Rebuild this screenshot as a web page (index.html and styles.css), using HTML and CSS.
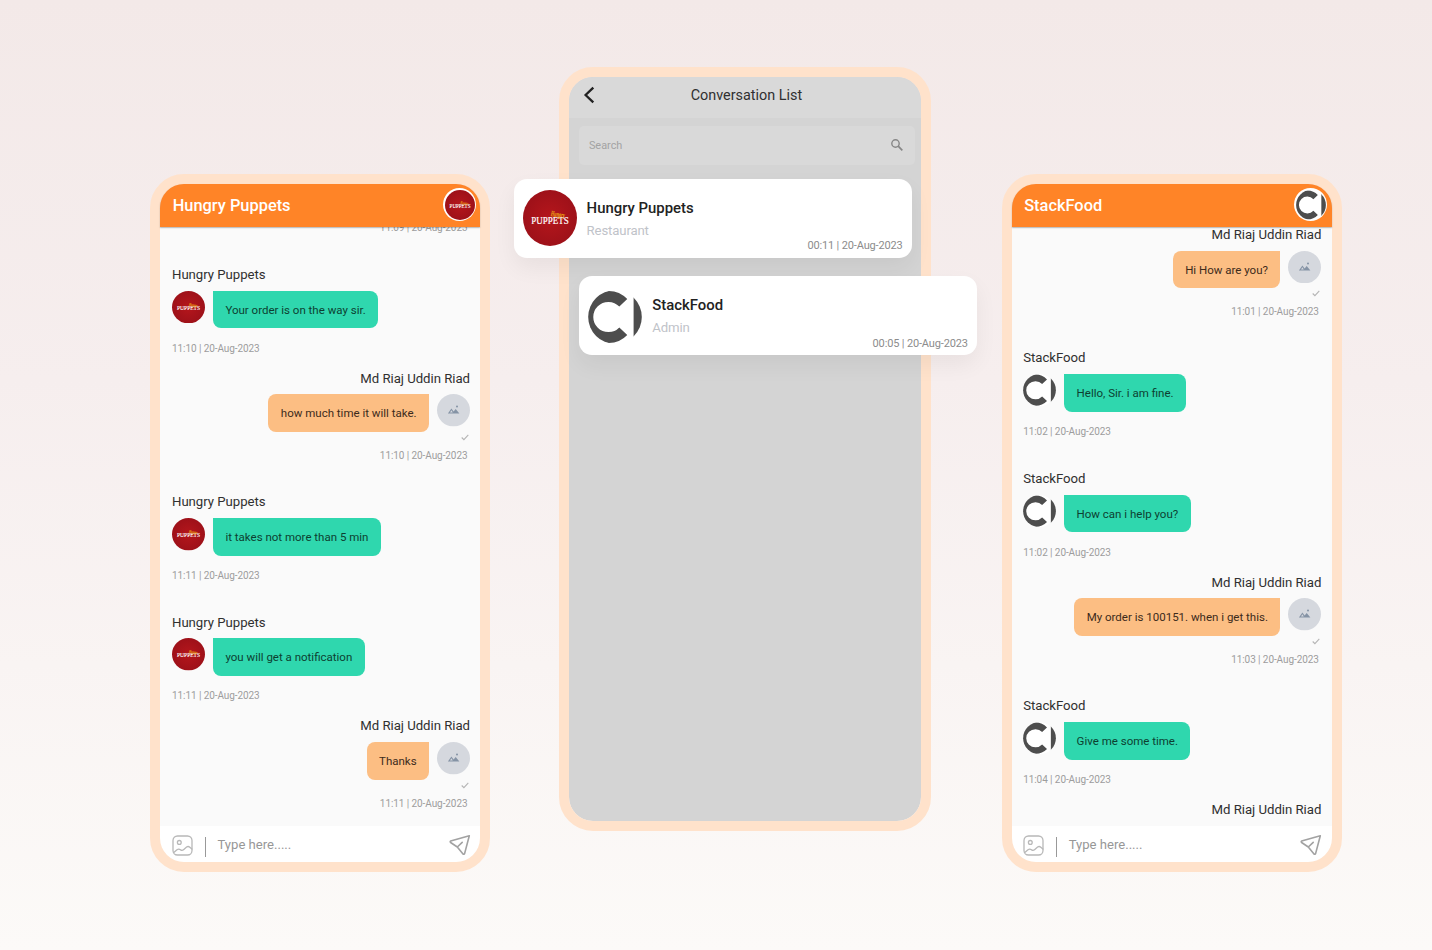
FILE: index.html
```html
<!DOCTYPE html>
<html lang="en">
<head>
<meta charset="utf-8">
<title>Conversations</title>
<link rel="stylesheet" href="styles.css">
</head>
<body>
<svg class="defs" width="0" height="0" aria-hidden="true">
  <defs>
    <radialGradient id="red"><stop offset="0" stop-color="#b5161c"/><stop offset="1" stop-color="#9e1119"/></radialGradient>
    <clipPath id="disc"><circle cx="27" cy="27" r="26.8"/></clipPath>
  </defs>
  <symbol id="puppets" viewBox="0 0 54 54" preserveAspectRatio="none">
    <circle cx="27" cy="27" r="27" fill="url(#red)"/>
    <text x="8.3" y="32.5" class="logo-main" textLength="37.5" lengthAdjust="spacingAndGlyphs">PUPPETS</text>
    <text x="27.5" y="25" class="logo-sub" textLength="14" lengthAdjust="spacingAndGlyphs" transform="rotate(9 27.5 25)">Hungry</text>
  </symbol>
  <symbol id="stack" viewBox="0 0 54 54" preserveAspectRatio="none">
    <g clip-path="url(#disc)">
      <circle cx="27" cy="27" r="27" class="stack-bg"/>
      <path d="M35.3 12.8A20.6 20.6 0 1 0 35.3 41.2" fill="none" stroke="#4d4d4d" stroke-width="11"/>
      <path d="M45.6 6.5V47.5H54V6.5Z" fill="#4d4d4d"/>
    </g>
  </symbol>
  <symbol id="person" viewBox="0 0 33 32" preserveAspectRatio="none">
    <ellipse cx="16.5" cy="16" rx="16.5" ry="16" fill="#d5d8de"/>
    <path d="M10.9 19.3 14.4 14.4 16.6 17.3 18.7 14.7 22.4 19.3ZM13 18.2H15.8L14.4 16.1Z" fill="#8593a5" fill-rule="evenodd"/>
    <circle cx="20" cy="12.3" r="1" fill="#8593a5"/>
  </symbol>
  <symbol id="tick" viewBox="0 0 8 7"><path d="M.7 3.5 2.9 5.7 7.3 .9" fill="none" stroke="#b5b5b5" stroke-width="1.1"/></symbol>
  <symbol id="image" viewBox="0 0 21 21">
    <g fill="none" stroke="#b8b8b8" stroke-width="1.3" stroke-linecap="round" stroke-linejoin="round">
      <rect x="1" y="1" width="19" height="19" rx="4.5"/><circle cx="7.3" cy="7.4" r="1.9"/>
      <path d="M1.8 17.4 5 14.7Q6.8 13.4 8.5 14.8 10 16.2 11.8 14.5L14.6 12.1Q16.2 10.9 17.8 12.2L19.9 14"/>
    </g>
  </symbol>
  <symbol id="send" viewBox="0 0 22 22">
    <path d="M20.3 1.7 1.6 7.1Q.8 7.8 1.6 8.5L8.3 13 14 20Q15 20.7 15.6 19.6ZM8.3 13 13.2 8.3" fill="none" stroke="#a2a2a2" stroke-width="1.6" stroke-linejoin="round" stroke-linecap="round"/>
  </symbol>
</svg>

<main class="stage">
  <section class="phone chat">
    <header class="chat-head"><h1>Hungry Puppets</h1><span class="head-avatar"><svg><use href="#puppets"/></svg></span></header>
    <div class="messages from-date">
      <article class="msg sent only-date"><time>11:09 | 20-Aug-2023</time></article>
      <article class="msg received"><h2>Hungry Puppets</h2><div class="row"><svg class="avatar"><use href="#puppets"/></svg><p class="bubble">Your order is on the way sir.</p></div><time>11:10 | 20-Aug-2023</time></article>
      <article class="msg sent"><h2>Md Riaj Uddin Riad</h2><div class="row"><p class="bubble">how much time it will take.</p><svg class="avatar"><use href="#person"/></svg></div><svg class="tick"><use href="#tick"/></svg><time>11:10 | 20-Aug-2023</time></article>
      <article class="msg received"><h2>Hungry Puppets</h2><div class="row"><svg class="avatar"><use href="#puppets"/></svg><p class="bubble">it takes not more than 5 min</p></div><time>11:11 | 20-Aug-2023</time></article>
      <article class="msg received"><h2>Hungry Puppets</h2><div class="row"><svg class="avatar"><use href="#puppets"/></svg><p class="bubble">you will get a notification</p></div><time>11:11 | 20-Aug-2023</time></article>
      <article class="msg sent"><h2>Md Riaj Uddin Riad</h2><div class="row"><p class="bubble">Thanks</p><svg class="avatar"><use href="#person"/></svg></div><svg class="tick"><use href="#tick"/></svg><time>11:11 | 20-Aug-2023</time></article>
    </div>
    <footer class="composer"><svg class="image-icon"><use href="#image"/></svg><span class="divider"></span><span class="hint">Type here.....</span><svg class="send-icon"><use href="#send"/></svg></footer>
  </section>

  <section class="phone list">
    <header class="list-head"><svg class="back" viewBox="0 0 12 18"><path d="M10.3 1.6 2.6 9 10.3 16.4" fill="none" stroke="#222" stroke-width="2.3"/></svg><h1>Conversation List</h1></header>
    <div class="search"><span>Search</span><svg viewBox="0 0 12 12"><circle cx="4.5" cy="4.5" r="3.7" fill="none" stroke="#868686" stroke-width="1.4"/><path d="M7.2 7.2 11.3 11.3" stroke="#868686" stroke-width="1.7"/></svg></div>
    <article class="card first"><svg class="card-avatar puppets"><use href="#puppets"/></svg><div class="who"><h2>Hungry Puppets</h2><p>Restaurant</p></div><time>00:11 | 20-Aug-2023</time></article>
    <article class="card second"><svg class="card-avatar"><use href="#stack"/></svg><div class="who"><h2>StackFood</h2><p>Admin</p></div><time>00:05 | 20-Aug-2023</time></article>
  </section>

  <section class="phone chat support">
    <header class="chat-head"><h1>StackFood</h1><span class="head-avatar"><svg><use href="#stack"/></svg></span></header>
    <div class="messages from-name">
      <article class="msg sent"><h2>Md Riaj Uddin Riad</h2><div class="row"><p class="bubble">Hi How are you?</p><svg class="avatar"><use href="#person"/></svg></div><svg class="tick"><use href="#tick"/></svg><time>11:01 | 20-Aug-2023</time></article>
      <article class="msg received"><h2>StackFood</h2><div class="row"><svg class="avatar"><use href="#stack"/></svg><p class="bubble">Hello, Sir. i am fine.</p></div><time>11:02 | 20-Aug-2023</time></article>
      <article class="msg received"><h2>StackFood</h2><div class="row"><svg class="avatar"><use href="#stack"/></svg><p class="bubble">How can i help you?</p></div><time>11:02 | 20-Aug-2023</time></article>
      <article class="msg sent"><h2>Md Riaj Uddin Riad</h2><div class="row"><p class="bubble">My order is 100151. when i get this.</p><svg class="avatar"><use href="#person"/></svg></div><svg class="tick"><use href="#tick"/></svg><time>11:03 | 20-Aug-2023</time></article>
      <article class="msg received"><h2>StackFood</h2><div class="row"><svg class="avatar"><use href="#stack"/></svg><p class="bubble">Give me some time.</p></div><time>11:04 | 20-Aug-2023</time></article>
      <article class="msg sent"><h2>Md Riaj Uddin Riad</h2></article>
    </div>
    <footer class="composer"><svg class="image-icon"><use href="#image"/></svg><span class="divider"></span><span class="hint">Type here.....</span><svg class="send-icon"><use href="#send"/></svg></footer>
  </section>
</main>
</body>
</html>
```
FILE: styles.css
```css
* { box-sizing: border-box; }
body { margin: 0; font-family: Roboto, "Liberation Sans", sans-serif; color: #303030; }
h1, h2, p { margin: 0; font-weight: 400; white-space: nowrap; }
time { white-space: nowrap; }
svg { display: block; flex: none; }
.defs { position: absolute; }
.logo-main { font: 400 10px "Liberation Serif", serif; fill: #fff; stroke: #fff; stroke-width: .2px; }
.logo-sub { font: italic 700 8px "Liberation Serif", serif; fill: #f2b012; }

.stage {
  width: 1432px; height: 950px; padding: 0 90px 0 150px; overflow: hidden;
  display: flex; justify-content: space-between; align-items: flex-start;
  background: linear-gradient(#f3e9e8 0%, #f6eeee 40%, #fcfaf8 100%);
}
.phone { border: 10px solid #ffe2cb; border-radius: 34px; background: #ffe2cb; }

.chat { width: 340px; height: 697.5px; margin-top: 174px; display: flex; flex-direction: column; }
.chat-head {
  height: 42.7px; flex: none; padding: 0 4px 1.6px 12.7px; background: #ff8427; border-radius: 24px 24px 0 0;
  display: flex; align-items: center; justify-content: space-between;
  box-shadow: 0 1px 1.5px rgba(0,0,0,.28); position: relative; z-index: 1;
}
.chat-head h1 { color: #fff; font-size: 16.4px; font-weight: 500; padding-top: 1px; }
.head-avatar { width: 33px; height: 33px; padding: 1.5px; border-radius: 50%; background: #fff; }
.head-avatar svg { width: 30px; height: 30px; }

.messages { flex: 1; min-height: 0; overflow: hidden; background: #fafafa; padding: 0 10px 0 12px; }
.msg { display: flex; flex-direction: column; align-items: flex-start; }
.msg.sent { align-items: flex-end; }
.from-date .msg:first-child { margin-top: -5.4px; }
.from-name .msg:first-child { margin-top: -2px; }
.msg + .received { margin-top: 29.4px; }
.received + .sent { margin-top: 13px; }
.msg h2 { font-size: 13.2px; line-height: 20.4px; letter-spacing: -.03px; }
.row { display: flex; gap: 8px; margin-top: 5.5px; height: 37.7px; }
.avatar { width: 33px; height: 32.4px; }
.bubble { height: 37.7px; padding: 0 12.4px; font-size: 11.5px; line-height: 38px; color: #0d3f31; background: #2fd7ae; border-radius: 0 8px 8px 8px; }
.sent .bubble { background: #fcbe83; color: #3d2b1b; border-radius: 8px 0 8px 8px; }
.msg time { font-size: 10px; letter-spacing: -.08px; line-height: 14px; margin-top: 13.3px; color: #9d9d9d; }
.tick { width: 8px; height: 7px; margin: 2px 1px 0 0; }
.msg.sent time { margin: 7.7px 2.5px 0 0; }
.msg.sent.only-date time { margin-top: 0; }
.stack-bg { fill: #fff; }
.messages .stack-bg { fill: #fafafa; }

.composer { flex: none; height: 35.3px; padding: 2.4px 9.5px 0 11.5px; background: #fff; border-radius: 0 0 24px 24px; display: flex; align-items: center; }
.image-icon { width: 21px; height: 21px; }
.divider { width: 1px; height: 20px; margin: 3px 12px 0; background: #999; }
.hint { flex: 1; font-size: 13.1px; color: #979797; padding-bottom: 1px; }
.send-icon { width: 22px; height: 22px; }

.support .chat-head { padding: 0 5px 1.6px 12.2px; }
.support .messages { padding: 0 10.7px 0 11.2px; }
.support .composer { padding: 2.4px 10.3px 0 10.7px; }

.list { width: 372px; height: 764.5px; margin: 66.5px 1.2px 0 0; position: relative; background: #d4d4d4 padding-box; }
.list-head { height: 41px; background: #d9d9d9; border-radius: 24px 24px 0 0; display: flex; align-items: center; justify-content: center; position: relative; padding: 0 0 4px 2px; }
.list-head h1 { font-size: 14.4px; }
.back { position: absolute; left: 13.5px; top: 9.5px; width: 12px; height: 18px; }
.search { height: 39px; margin: 8px 6px 0 10px; padding: 0 12px 0 9.5px; border-radius: 5px; background: #d9d9d9; display: flex; align-items: center; justify-content: space-between; font-size: 10.9px; color: #a3a3a3; }
.search svg { width: 12px; height: 12px; }

.card { position: absolute; width: 398.5px; height: 79px; border-radius: 13px; background: #fff; display: flex; box-shadow: 0 10px 22px rgba(0,0,0,.055); }
.card.first { left: -55.8px; top: 102.9px; }
.card.second { left: 9.4px; top: 199.6px; }
.card-avatar { width: 54px; height: 54px; margin: 13.5px 10.2px 0 9.3px; }
.card-avatar.puppets { height: 56px; margin: 11px 9.7px 0 9.3px; }
.who { padding-top: 18.4px; }
.first .who { padding-top: 17.2px; }
.card h2 { font-size: 14.9px; line-height: 22px; font-weight: 500; color: #222; }
.card p { font-size: 13.2px; line-height: 18px; margin-top: 3px; color: #bfc3c9; letter-spacing: -.15px; }
.card time { position: absolute; right: 9.5px; bottom: 4.8px; font-size: 11px; line-height: 15px; color: #8c8c8c; letter-spacing: -.15px; }
.first time { bottom: 5.6px; }
.second time { bottom: 4.1px; }
```
